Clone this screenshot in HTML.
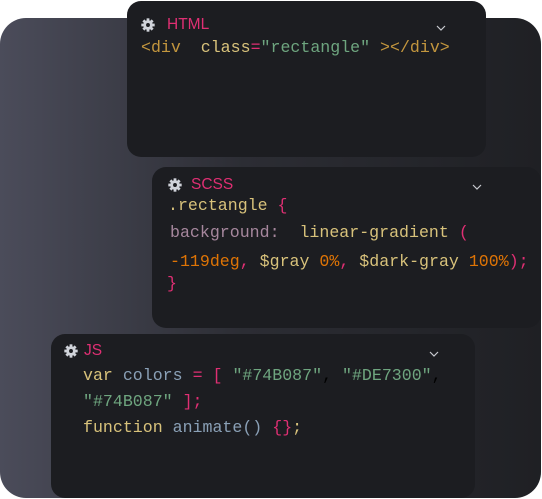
<!DOCTYPE html>
<html><head><style>
body{margin:0;width:542px;height:499px;background:#fff;position:relative;overflow:hidden;font-family:"Liberation Mono",monospace;font-size:16.6px}
.bg{position:absolute;left:0;top:18px;width:541px;height:480px;border-radius:26px;background:linear-gradient(90deg,#4b4c5a 0%,#2c2d34 45%,#1f2024 100%)}
.p{position:absolute;background:#1c1d21;border-radius:14px}
.t{position:absolute;white-space:pre;line-height:20px}
.g{position:absolute;width:14px;height:14px}
.c{position:absolute;width:10px;height:6px}
.pk{color:#df2f73}.y{color:#d8c27b}.gd{color:#c3963e}.gr{color:#6ea57f}.pu{color:#a6879d}.or{color:#df7405}.bl{color:#8aa0b6}
.h{font-family:"Liberation Sans",sans-serif;font-size:15.5px}
</style></head><body>
<div class="bg"></div>
<svg width="0" height="0" style="position:absolute"><defs><g id="gear"><circle cx="6.5" cy="6.5" r="4.4" fill="#d0d3da"/><g stroke="#d0d3da" stroke-width="2.6"><line x1="6.5" y1="0.3" x2="6.5" y2="12.7"/><line x1="0.3" y1="6.5" x2="12.7" y2="6.5"/><line x1="2.2" y1="2.2" x2="10.8" y2="10.8"/><line x1="10.8" y1="2.2" x2="2.2" y2="10.8"/></g><circle cx="6.5" cy="6.5" r="1.8" fill="#1c1d21"/></g><polyline id="chev" points="1,1 5,5 9,1" fill="none" stroke="#c8cad0" stroke-width="1.2"/></defs></svg>

<div class="p" style="left:127px;top:1px;width:359px;height:156px"></div>
<svg class="g" style="left:141px;top:18px" viewBox="0 0 13 13"><use href="#gear"/></svg>
<div class="t h pk" style="left:167px;top:15px">HTML</div>
<svg class="c" style="left:436px;top:25px" viewBox="0 0 10 6"><use href="#chev"/></svg>
<div class="t" style="left:141px;top:38px"><span class="gd">&lt;div</span>  <span class="y">class</span><span class="pk">=</span><span class="gr">"rectangle"</span><span class="gd"> &gt;&lt;/div&gt;</span></div>

<div class="p" style="left:152px;top:167px;width:389px;height:161px"></div>
<svg class="g" style="left:168px;top:178px" viewBox="0 0 13 13"><use href="#gear"/></svg>
<div class="t h pk" style="left:191px;top:175px">SCSS</div>
<svg class="c" style="left:472px;top:184px" viewBox="0 0 10 6"><use href="#chev"/></svg>
<div class="t y" style="left:168px;top:196px">.rectangle <span class="pk">{</span></div>
<div class="t" style="left:170px;top:223px"><span class="pu">background:</span>  <span class="y">linear-gradient</span> <span class="pk">(</span></div>
<div class="t" style="left:170px;top:252px"><span class="or">-119deg</span><span class="pk">,</span> <span class="y">$gray</span> <span class="or">0%</span><span class="pk">,</span> <span class="y">$dark-gray</span> <span class="or">100%</span><span class="pk">);</span></div>
<div class="t pk" style="left:167px;top:274px">}</div>

<div class="p" style="left:51px;top:334px;width:424px;height:164px"></div>
<svg class="g" style="left:64px;top:344px" viewBox="0 0 13 13"><use href="#gear"/></svg>
<div class="t h pk" style="left:84px;top:341px">JS</div>
<svg class="c" style="left:429px;top:351px" viewBox="0 0 10 6"><use href="#chev"/></svg>
<div class="t" style="left:83px;top:366px"><span class="y">var</span> <span class="bl">colors</span> <span class="pk">=</span> <span class="pk">[</span> <span class="gr">"#74B087"</span>, <span class="gr">"#DE7300"</span>,</div>
<div class="t" style="left:83px;top:392px"><span class="gr">"#74B087"</span> <span class="pk">];</span></div>
<div class="t" style="left:83px;top:418px"><span class="y">function</span> <span class="bl">animate()</span> <span class="pk">{}</span><span class="y">;</span></div>
</body></html>
